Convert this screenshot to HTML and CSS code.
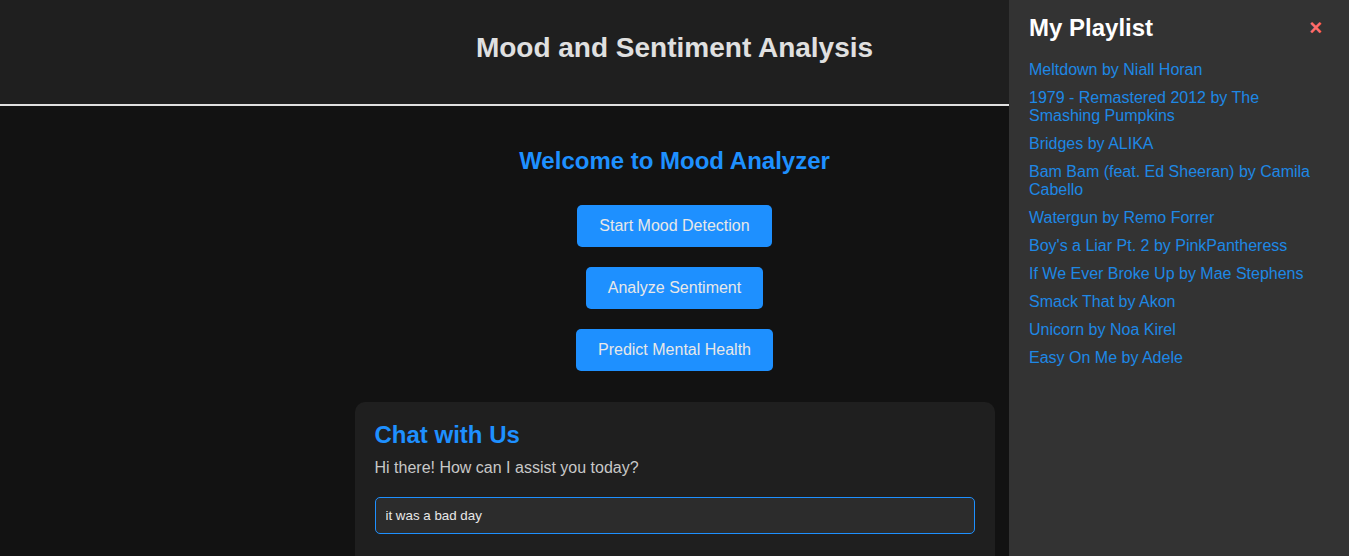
FILE: index.html
```html
<!DOCTYPE html>
<html lang="en">
<head>
<meta charset="utf-8">
<title>Mood and Sentiment Analysis</title>
<link rel="stylesheet" href="styles.css">
</head>
<body>
<header class="site-header">
  <h1 class="site-title">Mood and Sentiment Analysis</h1>
</header>
<main class="main">
  <h2 class="welcome">Welcome to Mood Analyzer</h2>
  <div class="actions">
    <button class="btn">Start Mood Detection</button>
    <button class="btn">Analyze Sentiment</button>
    <button class="btn">Predict Mental Health</button>
  </div>
  <section class="chat">
    <h2 class="chat-title">Chat with Us</h2>
    <p class="chat-intro">Hi there! How can I assist you today?</p>
    <input class="chat-input" type="text" value="it was a bad day">
  </section>
</main>
<aside class="playlist">
  <div class="playlist-head">
    <h2 class="playlist-title">My Playlist</h2>
    <span class="close">&times;</span>
  </div>
  <ul class="songs">
    <li><a href="#">Meltdown by Niall Horan</a></li>
    <li><a href="#">1979 - Remastered 2012 by The Smashing Pumpkins</a></li>
    <li><a href="#">Bridges by ALIKA</a></li>
    <li><a href="#">Bam Bam (feat. Ed Sheeran) by Camila Cabello</a></li>
    <li><a href="#">Watergun by Remo Forrer</a></li>
    <li><a href="#">Boy's a Liar Pt. 2 by PinkPantheress</a></li>
    <li><a href="#">If We Ever Broke Up by Mae Stephens</a></li>
    <li><a href="#">Smack That by Akon</a></li>
    <li><a href="#">Unicorn by Noa Kirel</a></li>
    <li><a href="#">Easy On Me by Adele</a></li>
  </ul>
</aside>
</body>
</html>
```

FILE: styles.css
```css
html, body {
  margin: 0;
  padding: 0;
  background: #121212;
  color: #e0e0e0;
  font-family: "Liberation Sans", Arial, sans-serif;
  height: 100%;
  overflow: hidden;
}

.site-header {
  background: #1f1f1f;
  border-bottom: 2px solid #e0e0e0;
  padding: 32px 0 40px;
  text-align: center;
}

.site-title {
  margin: 0;
  font-size: 28px;
  line-height: 32px;
  font-weight: bold;
  color: #e0e0e0;
}

.main {
  display: flex;
  flex-direction: column;
  align-items: center;
  padding-top: 41px;
}

.welcome {
  margin: 0;
  font-size: 24px;
  line-height: 28px;
  color: #1e90ff;
}

.actions {
  display: flex;
  flex-direction: column;
  align-items: center;
  gap: 20px;
  margin-top: 30px;
}

.btn {
  background: #1e90ff;
  color: #e8e8e8;
  border: none;
  border-radius: 5px;
  font-family: "Liberation Sans", Arial, sans-serif;
  font-size: 16px;
  line-height: 18px;
  padding: 12px 22px;
  cursor: pointer;
}

.chat {
  box-sizing: border-box;
  width: 640px;
  margin-top: 31px;
  background: #1f1f1f;
  border-radius: 10px;
  padding: 19px 20px 60px;
}

.chat-title {
  margin: 0;
  font-size: 24px;
  line-height: 28px;
  color: #1e90ff;
}

.chat-intro {
  margin: 9px 0 0;
  font-size: 16px;
  line-height: 20px;
  color: #c8c8c8;
}

.chat-input {
  box-sizing: border-box;
  display: block;
  width: 100%;
  height: 37px;
  margin-top: 19px;
  background: #2c2c2c;
  border: 1px solid #1e90ff;
  border-radius: 5px;
  color: #e8e8e8;
  font-family: "Liberation Sans", Arial, sans-serif;
  font-size: 13.33px;
  padding: 0 10px;
  outline: none;
}

.playlist {
  position: fixed;
  top: 0;
  right: 0;
  bottom: 0;
  width: 340px;
  box-sizing: border-box;
  background: #333333;
  padding: 14px 20px 20px;
}

.playlist-head {
  display: flex;
  justify-content: space-between;
  align-items: center;
}

.playlist-title {
  margin: 0;
  font-size: 24px;
  line-height: 28px;
  color: #ffffff;
}

.close {
  color: #ff6b6b;
  font-size: 22px;
  font-weight: bold;
  line-height: 28px;
  margin-right: 7px;
  cursor: pointer;
}

.songs {
  list-style: none;
  margin: 19px 0 0;
  padding: 0;
  display: flex;
  flex-direction: column;
  gap: 10px;
}

.songs li {
  font-size: 16px;
  line-height: 18px;
}

.songs a {
  color: #1e88e5;
  text-decoration: none;
}
```
